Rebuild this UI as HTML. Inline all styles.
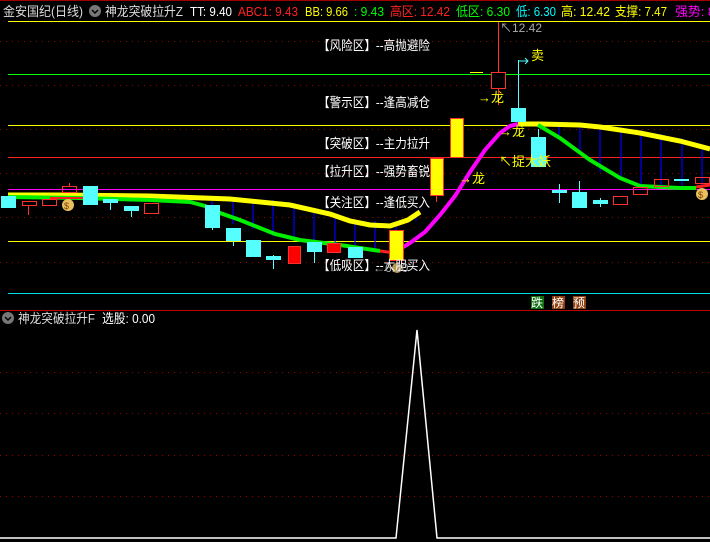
<!DOCTYPE html>
<html><head><meta charset="utf-8"><style>
html,body{margin:0;padding:0;background:#000;width:710px;height:542px;overflow:hidden}
svg{display:block}
text{font-family:"Liberation Sans","Noto Sans CJK SC",sans-serif;font-size:13px}
</style></head><body>
<svg width="710" height="542" viewBox="0 0 710 542" xmlns="http://www.w3.org/2000/svg">
<rect width="710" height="542" fill="#000"/>
<line x1="0" y1="0.5" x2="710" y2="0.5" stroke="#a00000" stroke-width="1"/>
<!-- header -->
<g style="font-size:13px" lengthAdjust="spacingAndGlyphs">
<text x="3" y="16" fill="#ddd" textLength="80" lengthAdjust="spacingAndGlyphs">金安国纪(日线)</text>
<text x="105" y="16" fill="#ddd" textLength="78" lengthAdjust="spacingAndGlyphs">神龙突破拉升Z</text>
<text x="190" y="16" fill="#fff" textLength="42" lengthAdjust="spacingAndGlyphs">TT: 9.40</text>
<text x="238" y="16" fill="#ff2020" textLength="60" lengthAdjust="spacingAndGlyphs">ABC1: 9.43</text>
<text x="305" y="16" fill="#ffff00" textLength="43" lengthAdjust="spacingAndGlyphs">BB: 9.66</text>
<text x="354" y="16" fill="#00ff00" textLength="30" lengthAdjust="spacingAndGlyphs">: 9.43</text>
<text x="390" y="16" fill="#ff2020" textLength="60" lengthAdjust="spacingAndGlyphs">高区: 12.42</text>
<text x="456" y="16" fill="#00ff00" textLength="54" lengthAdjust="spacingAndGlyphs">低区: 6.30</text>
<text x="516" y="16" fill="#00ffff" textLength="40" lengthAdjust="spacingAndGlyphs">低: 6.30</text>
<text x="561" y="16" fill="#ffff00" textLength="49" lengthAdjust="spacingAndGlyphs">高: 12.42</text>
<text x="615" y="16" fill="#ffff00" textLength="52" lengthAdjust="spacingAndGlyphs">支撑: 7.47</text>
<text x="675" y="16" fill="#ff00ff" textLength="40" lengthAdjust="spacingAndGlyphs">强势: 8</text>
</g>
<circle cx="95" cy="11" r="6" fill="#777"/>
<path d="M92 10 L95 13 L98 10" stroke="#000" stroke-width="1.4" fill="none"/>
<line x1="8" y1="21.5" x2="710" y2="21.5" stroke="#ffff00"/>
<!-- dotted grid -->
<g stroke="#a00000" stroke-dasharray="1 5">
<line x1="0" y1="41.5" x2="710" y2="41.5"/><line x1="0" y1="85.5" x2="710" y2="85.5"/>
<line x1="0" y1="129.5" x2="710" y2="129.5"/><line x1="0" y1="173.5" x2="710" y2="173.5"/>
<line x1="0" y1="217.5" x2="710" y2="217.5"/><line x1="0" y1="262.5" x2="710" y2="262.5"/>
<line x1="0" y1="372.5" x2="710" y2="372.5"/><line x1="0" y1="413.5" x2="710" y2="413.5"/>
<line x1="0" y1="455.5" x2="710" y2="455.5"/><line x1="0" y1="496.5" x2="710" y2="496.5"/>
</g>
<!-- level lines -->
<line x1="8" y1="74.5" x2="710" y2="74.5" stroke="#00ff00"/>
<line x1="8" y1="125.5" x2="710" y2="125.5" stroke="#ffff00"/>
<line x1="8" y1="157.5" x2="710" y2="157.5" stroke="#ff2020"/>
<line x1="8" y1="189.5" x2="710" y2="189.5" stroke="#ff00ff"/>
<line x1="8" y1="241.5" x2="710" y2="241.5" stroke="#ffff00"/>
<line x1="8" y1="293.5" x2="710" y2="293.5" stroke="#00e0e0"/>
<!-- blue sticks -->
<g stroke="#0000ff" stroke-width="1.2">
<line x1="29" y1="195" x2="29" y2="199"/><line x1="49" y1="195" x2="49" y2="199"/><line x1="90" y1="195" x2="90" y2="200"/>
<line x1="110" y1="195" x2="110" y2="200"/><line x1="131" y1="196" x2="131" y2="202"/><line x1="152" y1="196" x2="152" y2="202"/>
<line x1="192" y1="197" x2="192" y2="202"/><line x1="212" y1="198" x2="212" y2="210"/><line x1="233" y1="199" x2="233" y2="224"/>
<line x1="253" y1="199" x2="253" y2="229"/><line x1="273" y1="200" x2="273" y2="236"/><line x1="294" y1="203" x2="294" y2="240"/>
<line x1="314" y1="208" x2="314" y2="244"/><line x1="335" y1="214" x2="335" y2="246"/><line x1="355" y1="219" x2="355" y2="248"/>
<line x1="375" y1="221" x2="375" y2="251"/><line x1="396" y1="223" x2="396" y2="253"/><line x1="416" y1="215" x2="416" y2="221"/>
<line x1="559" y1="125" x2="559" y2="138"/><line x1="580" y1="125" x2="580" y2="154"/><line x1="600" y1="126" x2="600" y2="172"/>
<line x1="621" y1="127" x2="621" y2="179"/><line x1="641" y1="130" x2="641" y2="185"/><line x1="661" y1="134" x2="661" y2="187"/>
<line x1="682" y1="138" x2="682" y2="188"/><line x1="702" y1="146" x2="702" y2="188"/>
</g>
<!-- yellow MA -->
<polyline points="8,195 60,195 150,196 230,199 290,205 330,214 350,221 370,225 390,226 408,220 420,212" stroke="#ffff00" stroke-width="5" fill="none"/>
<polyline points="518,124 540,124 580,125 600,127 640,133 680,141 710,149" stroke="#ffff00" stroke-width="5" fill="none"/>
<!-- green MA -->
<polyline points="8,197 80,198 150,200 190,202 205,206 220,213 240,220 260,228 275,234 300,240 340,245 380,251" stroke="#00ee00" stroke-width="4" fill="none"/>
<polyline points="380,251 395,253" stroke="#ff2020" stroke-width="3" fill="none"/>
<polyline points="538,125 560,138 590,160 620,178 640,186 680,188 696,188" stroke="#00ee00" stroke-width="4" fill="none"/>
<polyline points="696,187 710,185" stroke="#ff2020" stroke-width="3" fill="none"/>
<polyline points="50,198 90,198" stroke="#ff2020" stroke-width="2" fill="none"/>
<!-- magenta -->
<polyline points="395,252 410,243 425,232 440,215 455,196 470,172 485,150 500,133 510,126 518,124" stroke="#ff00ff" stroke-width="4" fill="none"/>
<!-- candles -->
<g stroke-width="1">
<rect x="1" y="196" width="15" height="12" fill="#55ffff"/>
<line x1="28.5" y1="205" x2="28.5" y2="215" stroke="#ff3030"/><rect x="22.5" y="201.5" width="14" height="4" fill="none" stroke="#ff3030"/>
<rect x="42.5" y="199.5" width="14" height="6" fill="none" stroke="#ff3030"/>
<line x1="69.5" y1="183" x2="69.5" y2="186" stroke="#ff3030"/><rect x="62.5" y="186.5" width="14" height="6" fill="none" stroke="#ff3030"/>
<rect x="83" y="186" width="15" height="19" fill="#55ffff"/>
<line x1="110.5" y1="203" x2="110.5" y2="210" stroke="#55ffff"/><rect x="103" y="199" width="15" height="4" fill="#55ffff"/>
<line x1="131.5" y1="211" x2="131.5" y2="217" stroke="#55ffff"/><rect x="124" y="206" width="15" height="5" fill="#55ffff"/>
<rect x="144.5" y="203.5" width="14" height="10" fill="none" stroke="#ff3030"/>
<line x1="212.5" y1="228" x2="212.5" y2="230" stroke="#55ffff"/><rect x="205" y="205" width="15" height="23" fill="#55ffff"/>
<line x1="233.5" y1="241" x2="233.5" y2="246" stroke="#55ffff"/><rect x="226" y="228" width="15" height="13" fill="#55ffff"/>
<rect x="246" y="240" width="15" height="17" fill="#55ffff"/>
<line x1="273.5" y1="255" x2="273.5" y2="269" stroke="#55ffff"/><rect x="266" y="256" width="15" height="4" fill="#55ffff"/>
<rect x="288.5" y="246.5" width="12" height="17" fill="#ff0000" stroke="#ff3030"/>
<line x1="314.5" y1="252" x2="314.5" y2="263" stroke="#55ffff"/><rect x="307" y="242" width="15" height="10" fill="#55ffff"/>
<rect x="327.5" y="243.5" width="13" height="9" fill="#ff0000" stroke="#ff3030"/>
<rect x="348" y="247" width="15" height="11" fill="#55ffff"/>
<rect x="389.5" y="230.5" width="14" height="30" fill="#ffff00" stroke="#ff3030"/>
<line x1="436.5" y1="195" x2="436.5" y2="202" stroke="#ff3030"/><rect x="430.5" y="158.5" width="13" height="37" fill="#ffff00" stroke="#ff3030"/>
<rect x="450.5" y="118.5" width="13" height="39" fill="#ffff00" stroke="#ff3030"/>
<line x1="498.5" y1="22" x2="498.5" y2="105" stroke="#ff3030"/><rect x="491.5" y="72.5" width="14" height="16" fill="#000" stroke="#ff3030"/>
<line x1="470" y1="72.5" x2="483" y2="72.5" stroke="#ffff00"/>
<line x1="518.5" y1="60" x2="518.5" y2="108" stroke="#55ffff"/><rect x="511" y="108" width="15" height="14" fill="#55ffff"/>
<line x1="538.5" y1="129" x2="538.5" y2="137" stroke="#55ffff"/><rect x="531" y="137" width="15" height="30" fill="#55ffff"/>
<line x1="559.5" y1="184" x2="559.5" y2="203" stroke="#55ffff"/><rect x="552" y="190" width="15" height="3" fill="#55ffff"/>
<line x1="579.5" y1="181" x2="579.5" y2="192" stroke="#55ffff"/><rect x="572" y="192" width="15" height="16" fill="#55ffff"/>
<line x1="600.5" y1="198" x2="600.5" y2="207" stroke="#55ffff"/><rect x="593" y="200" width="15" height="4" fill="#55ffff"/>
<rect x="613.5" y="196.5" width="14" height="8" fill="none" stroke="#ff3030"/>
<rect x="633.5" y="187.5" width="14" height="7" fill="none" stroke="#ff3030"/>
<rect x="654.5" y="179.5" width="14" height="7" fill="none" stroke="#ff3030"/>
<rect x="674" y="179" width="15" height="2" fill="#55ffff"/>
<rect x="695.5" y="177.5" width="14" height="6" fill="none" stroke="#ff3030"/>
</g>
<!-- money bags -->
<circle cx="68" cy="205" r="6" fill="#e8c060"/><text x="64" y="209" fill="#804000" style="font-size:9px">$</text>
<circle cx="702" cy="194" r="6" fill="#e8c060"/><text x="698" y="198" fill="#804000" style="font-size:9px">$</text>
<circle cx="397" cy="268" r="5" fill="#e8c060" opacity="0.8"/>
<!-- zone labels -->
<g fill="#fff">
<text x="318" y="50" textLength="112" lengthAdjust="spacingAndGlyphs">【风险区】--高抛避险</text>
<text x="318" y="107" textLength="112" lengthAdjust="spacingAndGlyphs">【警示区】--逢高减仓</text>
<text x="318" y="148" textLength="112" lengthAdjust="spacingAndGlyphs">【突破区】--主力拉升</text>
<text x="318" y="176" textLength="112" lengthAdjust="spacingAndGlyphs">【拉升区】--强势畜锐</text>
<text x="318" y="207" textLength="112" lengthAdjust="spacingAndGlyphs">【关注区】--逢低买入</text>
<text x="318" y="270" textLength="112" lengthAdjust="spacingAndGlyphs">【低吸区】--大胆买入</text>
</g>
<text x="373" y="272" fill="#aaa" style="font-size:12px">←6.30</text>
<text x="500" y="32" fill="#aaa" style="font-size:12px">↖12.42</text>
<g fill="#ffff00">
<text x="478" y="102">→龙</text>
<text x="499" y="136">→龙</text>
<text x="459" y="183">→龙</text>
<text x="499" y="166">↖捉大妖</text>
<text x="531" y="60">卖</text>
</g>
<path d="M518 61 L528 61 M525 58 L528 61 L525 64" stroke="#55ffff" fill="none"/>
<!-- badges -->
<rect x="531" y="296" width="13" height="13" fill="#107010"/><text x="531" y="307" fill="#fff" style="font-size:12px">跌</text>
<rect x="552" y="296" width="13" height="13" fill="#904010"/><text x="552" y="307" fill="#fff" style="font-size:12px">榜</text>
<rect x="573" y="296" width="13" height="13" fill="#904010"/><text x="573" y="307" fill="#fff" style="font-size:12px">预</text>
<!-- lower panel -->
<line x1="0" y1="310.5" x2="710" y2="310.5" stroke="#c00000"/>
<circle cx="8" cy="318" r="6" fill="#777"/>
<path d="M5 317 L8 320 L11 317" stroke="#000" stroke-width="1.4" fill="none"/>
<text x="18" y="323" fill="#ddd" textLength="77" lengthAdjust="spacingAndGlyphs">神龙突破拉升F</text>
<text x="102" y="323" fill="#fff" textLength="53" lengthAdjust="spacingAndGlyphs">选股: 0.00</text>
<polyline points="0,538 396,538 417,330 437,538 710,538" stroke="#fff" stroke-width="1.5" fill="none"/>
</svg>
</body></html>
